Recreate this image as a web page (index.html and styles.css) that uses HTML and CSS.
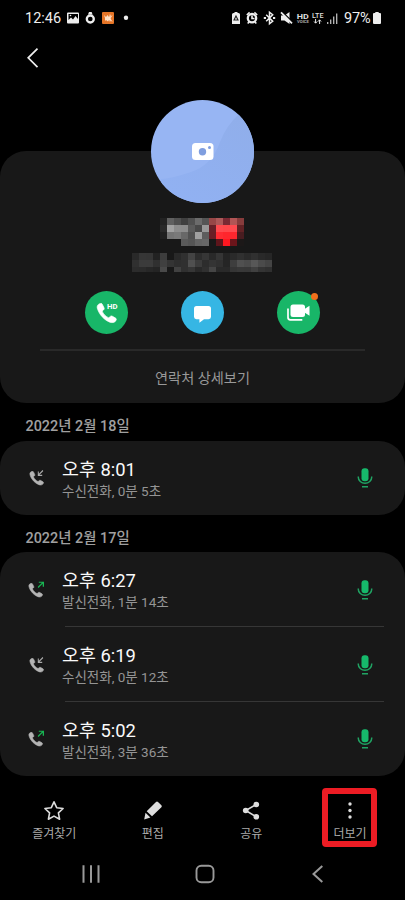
FILE: index.html
```
<!DOCTYPE html>
<html lang="ko">
<head>
<meta charset="utf-8">
<title>연락처</title>
<link rel="stylesheet" href="styles.css">
</head>
<body>
<svg class="defs" aria-hidden="true">
  <symbol id="phone" viewBox="0 0 16 16"><path d="M1.2 4.6C.2 2.2 1.8.6 3.5.3c.6-.1 1 .1 1.3.7l1.3 2.6c.3.7.2 1.2-.4 1.7l-1 .9c.6 1.900 3 4.300 5 5.100l1-.9c.6-.6 1.100-.7 1.800-.3l2.400 1.400c.6.400.7.900.5 1.400-.7 1.900-2.700 2.500-4.900 1.700C6.200 12.900 2.500 8.800 1.200 4.600Z"/></symbol>
  <symbol id="mic" viewBox="0 0 16 20"><rect x="4.500" y=".3" width="7" height="13" rx="3" fill="#16b96b"/><path d="M1.300 8.500v.7c0 3.500 3 6 6.700 6s6.700-2.500 6.700-6v-.7M5 18.700h6" fill="none" stroke="#20a363" stroke-width="1.500"/></symbol>
  <symbol id="in" viewBox="0 0 6 6"><path d="M5.500.5.8 5.200M.7 1.400v4h4" fill="none" stroke="#aaa" stroke-width="1.200"/></symbol>
  <symbol id="out" viewBox="0 0 6 6"><path d="M.5 5.500 5.200.8M1.200.6h4.200v4.200" fill="none" stroke="#18b653" stroke-width="1.200"/></symbol>
</svg>
<div class="screen">
  <header class="status">
    <span class="clock">12:46</span>
    <svg class="notices" width="65" height="14" viewBox="0 0 65 14">
      <path fill="#eee" fill-rule="evenodd" d="M1 1.500h10q1 0 1 1v9q0 1-1 1H1q-1 0-1-1v-9q0-1 1-1Zm.5 1.500v6L4 6.500l2 2L8.500 5 11 8V3Z"/><circle cx="3.500" cy="4.500" r=".8" fill="#eee"/>
      <circle cx="23.300" cy="8" r="3.500" fill="none" stroke="#eee" stroke-width="2.300"/><path d="m21 3.500 1-2.500h2.600l1 2.500Z" fill="#eee"/>
      <rect x="35" y="1" width="12" height="12" rx="1" fill="#e57527"/><path d="m37 4 2 2 1.500-2 1.500 2 2-2-1 3 1 3-2-1-1 1.500L39 9l-1 1V7Z" fill="#ffe0c4"/><path d="M43 3.500v7m2-6-2 3 2 3" fill="none" stroke="#ffe8d4" stroke-width=".8"/>
      <circle cx="59" cy="6.800" r="2.200" fill="#eee"/>
    </svg>
    <svg class="signals" width="109" height="16" viewBox="0 0 109 16">
      <path d="M3.500 2h3v1h1q1.500 0 1.500 1.500V14H1V4.500Q1 3 2.500 3h1Z" fill="#eee"/><path d="m5 6 2 4H3Z" fill="none" stroke="#222" stroke-width="1.100"/>
      <circle cx="21" cy="8.200" r="4.200" fill="none" stroke="#eee" stroke-width="2.300"/><path d="M21 5.500v3h2.500M15.800 5l2.800-2.700M26.200 5l-2.800-2.700M18 12l-1.300 1.500M24 12l1.300 1.500" fill="none" stroke="#eee" stroke-width="1.600"/>
      <path d="m35.200 4.800 6.500 6.500-3.200 2.500V2.200l3.200 2.500-6.500 6.600" fill="none" stroke="#eee" stroke-width="1.500"/><path d="M32.800 8h2.200M42 8h2.200" stroke="#eee" stroke-width="2"/>
      <path d="M50 5.500h3.500L58.500 2v12l-5-3.500H50Z" fill="#eee"/><path d="M51 1.500 62 12.500" stroke="#000" stroke-width="1.500"/><path d="M50 2.300 61 13.300" stroke="#eee" stroke-width="1.800"/>
      <text x="65.700" y="9" class="hd" textLength="12" lengthAdjust="spacingAndGlyphs">HD</text><text x="66" y="13" class="voice" textLength="12" lengthAdjust="spacingAndGlyphs">VOICE</text>
      <text x="81" y="8.200" class="lte" textLength="11.500" lengthAdjust="spacingAndGlyphs">LTE</text>
      <path d="M84.600 9v4m-1.500-1.500 1.500 1.700 1.500-1.700M88.600 14v-4m-1.500 1.500 1.500-1.700 1.500 1.700" fill="none" stroke="#eee"/>
      <path d="M96.700 14v-2M99.700 14V9.500M102.700 14V6.500M105.700 14V3.500" stroke="#bbb" stroke-width="1.300"/>
    </svg>
    <span class="percent">97%</span>
    <svg class="battery" width="8" height="12" viewBox="0 0 8 12"><path d="M2.300 0h3.400v1H7q1 0 1 1v9q0 1-1 1H1q-1 0-1-1V2q0-1 1-1h1.300Z" fill="#eee"/></svg>
  </header>
  <nav class="appbar"><svg width="12" height="20" viewBox="0 0 12 20"><path d="M10.500.7 1.200 9.800l9.300 9.300" fill="none" stroke="#eee" stroke-width="1.700"/></svg></nav>

  <section class="card profile">
    <svg class="avatar" width="103" height="103" viewBox="0 0 103 103">
      <defs><clipPath id="round"><circle cx="51.500" cy="51.500" r="51.500"/></clipPath><linearGradient id="shade" x1="1" y1="0" x2=".3" y2="1"><stop stop-color="#90aeea"/><stop offset="1" stop-color="#91b1f2"/></linearGradient></defs>
      <g clip-path="url(#round)"><path fill="#97b5f3" d="M0 0h103v103H0z"/><path d="M88 14Q75 26 69 42 61 65 40 72T10 79v24h93V14Z" fill="url(#shade)"/></g>
      <rect x="41" y="43" width="21.500" height="17" rx="3.500" fill="#fff"/><circle cx="51.500" cy="51.700" r="3.700" fill="#7f9edf"/><circle cx="58.500" cy="47.500" r="1.500" fill="#7f9edf"/>
    </svg>
    <svg class="mosaic name" width="84" height="28" data-cells="222222 606060 505050 404040 505050 6b6b6b 555555 984747 ad5959 7a2933 b15555 873c3c|292929 a2a2a2 8d8d8d 8c8c8c 5b5b5b 484848 999999 672027 ff4a4f ff484c ff4a50 622225|202020 757575 7a7a7a 686868 515151 a0a0a0 5d5d5d 691e25 ff2b32 ff262d ff262e 481c20|181818 181818 181818 5a5a5a 555555 646464 676767 181818 5e151b ff1720 6c151b 1c1818"></svg>
    <svg class="mosaic number" width="140" height="19" data-cells="292929 363636 353535 222222 3d3d3d 181818 292929 303030 434343 2d2d2d 363636 292929 353535 242424 2a2a2a 303030 2a2a2a 303030 292929 262626|303030 3b3b3b 3b3b3b 303030 404040 343434 2e2e2e 303030 505050 3c3c3c 2d2d2d 343434 303030 252525 3e3e3e 505050 4b4b4b 575757 4b4b4b 444444|2c2c2c 2b2b2b 272727 242424 494949 181818 414141 303030 363636 292929 303030 454545 292929 292929 353535 383838 373737 404040 343434 303030"></svg>
    <div class="actions">
      <button class="act green"><svg width="43" height="43" viewBox="0 0 43 43"><use href="#phone" x="11" y="12" width="21" height="21" fill="#fff" stroke="#fff" stroke-width=".5"/><text x="22" y="18" class="hdcall" textLength="10.500" lengthAdjust="spacingAndGlyphs">HD</text></svg></button>
      <button class="act blue"><svg width="43" height="43" viewBox="0 0 43 43"><path d="M15.500 15h12q2.500 0 2.500 2.500v8.300q0 2.400-2.500 2.400H23l-4.600 3.600v-3.600h-2.900q-2.500 0-2.500-2.400v-8.300Q13 15 15.500 15Z" fill="#fff"/></svg></button>
      <button class="act green"><svg width="43" height="43" viewBox="0 0 43 43"><rect x="13.500" y="13.500" width="14.500" height="12.500" rx="2.500" fill="#fff"/><path d="m27.500 18 5-3.200v10l-5-3.200Z" fill="#fff"/><path d="M11 17.500v9q0 2.300 2.300 2.300h12" fill="none" stroke="#fff" stroke-width="1.700"/></svg><i class="dot"></i></button>
    </div>
    <a class="details">연락처 상세보기</a>
  </section>

  <h2 class="date">2022년 2월 18일</h2>
  <section class="card">
    <div class="call"><svg class="kind" width="18" height="18" viewBox="0 0 18 18"><use href="#phone" x="1" y="2" width="15" height="15"/><use href="#in" x="9.500" y="1" width="6" height="6"/></svg><div class="info"><b>오후 8:01</b><span>수신전화, 0분 5초</span></div><svg class="mic" width="16" height="20"><use href="#mic"/></svg></div>
  </section>
  <h2 class="date second">2022년 2월 17일</h2>
  <section class="card">
    <div class="call"><svg class="kind" width="18" height="18" viewBox="0 0 18 18"><use href="#phone" x="0" y="2" width="15" height="15"/><use href="#out" x="9.500" y=".5" width="6.500" height="6.500"/></svg><div class="info"><b>오후 6:27</b><span>발신전화, 1분 14초</span></div><svg class="mic" width="16" height="20"><use href="#mic"/></svg></div>
    <div class="call"><svg class="kind" width="18" height="18" viewBox="0 0 18 18"><use href="#phone" x="1" y="2" width="15" height="15"/><use href="#in" x="9.500" y="1" width="6" height="6"/></svg><div class="info"><b>오후 6:19</b><span>수신전화, 0분 12초</span></div><svg class="mic" width="16" height="20"><use href="#mic"/></svg></div>
    <div class="call"><svg class="kind" width="18" height="18" viewBox="0 0 18 18"><use href="#phone" x="0" y="2" width="15" height="15"/><use href="#out" x="9.500" y=".5" width="6.500" height="6.500"/></svg><div class="info"><b>오후 5:02</b><span>발신전화, 3분 36초</span></div><svg class="mic" width="16" height="20"><use href="#mic"/></svg></div>
  </section>

  <footer class="tools">
    <a><svg width="22" height="22" viewBox="0 0 22 22"><path d="m11 1.800 2.700 5.900 6.400.8-4.700 4.400 1.200 6.300-5.600-3.100-5.600 3.100 1.200-6.300-4.700-4.400 6.400-.8Z" fill="none" stroke="#ddd" stroke-width="1.600" stroke-linejoin="round"/></svg><span>즐겨찾기</span></a>
    <a><svg width="22" height="22" viewBox="0 0 22 22"><path d="M14 2q1-.9 2 0l3.400 3.200q.9 1 0 2L10 16.200 4.700 11.200ZM3.500 12.700l4.900 4.700-6.200 2Z" fill="#ddd"/></svg><span>편집</span></a>
    <a><svg width="22" height="22" viewBox="0 0 22 22"><path d="M16.300 4.500 5.700 10.500l10.600 6.300" fill="none" stroke="#ddd" stroke-width="1.600"/><g fill="#ddd"><circle cx="16.300" cy="4.500" r="2.800"/><circle cx="5.700" cy="10.500" r="2.800"/><circle cx="16.300" cy="16.800" r="2.800"/></g></svg><span>공유</span></a>
    <a class="more"><svg width="22" height="22" viewBox="0 0 22 22" fill="#ddd"><circle cx="11" cy="4" r="1.700"/><circle cx="11" cy="10.500" r="1.700"/><circle cx="11" cy="17" r="1.700"/></svg><span>더보기</span></a>
  </footer>
  <nav class="system">
    <svg width="18" height="18" viewBox="0 0 18 18"><path d="M1.500.3v17.400M9 .3v17.400M16.500.3v17.400" stroke="#999" stroke-width="2"/></svg>
    <svg class="home" width="20" height="20" viewBox="0 0 20 20"><rect x="1.500" y="1.700" width="17" height="16.500" rx="4.800" fill="none" stroke="#999" stroke-width="1.900"/></svg>
    <svg width="12" height="18" viewBox="0 0 12 18"><path d="M10.300.9 1.500 9l8.800 8.100" fill="none" stroke="#999" stroke-width="2"/></svg>
  </nav>
</div>
<script src="mosaic.js"></script>
</body>
</html>
```
FILE: styles.css
```
* { box-sizing: border-box; }
body { margin: 0; background: #000; color: #eee; font-family: Roboto, "Noto Sans CJK KR", sans-serif; }
svg { display: block; flex: none; }
.defs { position: absolute; width: 0; height: 0; }
.screen { width: 405px; height: 900px; overflow: hidden; background: #000; }
.status { height: 36px; display: flex; align-items: center; padding-left: 25px; font-size: 14.500px; }
.clock { width: 42px; }
.signals { margin-left: 99px; }
.percent { width: 27px; margin-left: 4px; letter-spacing: -.1px; }
.battery { margin-left: 2px; }
.hd { font: 700 8px Roboto, sans-serif; fill: #ddd; }
.voice { font: 700 3.500px Roboto, sans-serif; fill: #aaa; }
.lte { font: 500 7px Roboto, sans-serif; fill: #ddd; }
.appbar { height: 115px; padding: 12px 0 0 27px; }
.card { background: #181818; border-radius: 26px; }
.profile { height: 252px; display: flex; flex-direction: column; align-items: center; }
.avatar { margin-top: -51px; }
.name { margin: 15px 1px 0 0; }
.number { margin: 7px 1px 0 0; }
.actions { width: 235px; display: flex; justify-content: space-between; margin: 19px 0 15px; }
.act { position: relative; width: 43px; height: 43px; padding: 0; border: 0; border-radius: 50%; }
.green { background: #18b668; }
.blue { background: #36b6e4; }
.dot { position: absolute; right: 2px; top: 2px; width: 7px; height: 7px; border-radius: 50%; background: #f0701c; }
.hdcall { font: 700 7px Roboto, sans-serif; fill: #fff; }
.details { width: 325px; border-top: 2px solid #292929; text-align: center; font-size: 14.200px; line-height: 20px; padding-top: 17px; color: #999; }
.date { margin: 0; height: 38px; padding: 14px 0 0 25.500px; font-size: 14.400px; line-height: 20px; font-weight: 500; color: #a0a0a0; }
.second { height: 37px; }
.call { height: 74px; display: flex; align-items: center; padding: 0 32px 0 28px; position: relative; }
.call + .call, .second + .card .call:first-child { height: 75px; }
.call:last-child:not(:first-child) { height: 74px; }
.call + .call::before { content: ""; position: absolute; left: 65px; right: 21px; top: -1px; height: 1px; background: #363636; }
.kind { fill: #b4b4b4; stroke: #b4b4b4; stroke-width: .6px; }
.info { flex: 1; margin: 2px 0 0 16px; }
.info b { display: block; font-size: 18.400px; line-height: 24px; font-weight: 400; color: #fafafa; }
.info span { display: block; font-size: 13.500px; line-height: 19px; color: #949494; }
.tools { height: 74px; display: flex; padding: 12px 0 0 5px; }
.tools a { width: 98.500px; height: 59px; display: flex; flex-direction: column; align-items: center; padding-top: 12px; font-size: 12px; line-height: 18px; color: #aaa; }
.tools span { margin-top: 3px; }
.tools .more { width: 55px; margin-left: 21.500px; border: 6px solid #ed1c24; border-radius: 4px; padding: 6px 0 0 1px; white-space: nowrap; }
.system { height: 48px; display: flex; align-items: center; justify-content: space-between; padding: 0 81px 0 82px; }
.home { margin-right: 3px; }
```
FILE: mosaic.js
```
// Paints each privacy mosaic as a grid of 7px cells.
document.querySelectorAll(".mosaic").forEach((svg) => {
  svg.dataset.cells.split("|").forEach((row, y) => {
    row.split(" ").forEach((color, x) => {
      const cell = document.createElementNS("http://www.w3.org/2000/svg", "rect");
      cell.setAttribute("x", x * 7);
      cell.setAttribute("y", y * 7);
      cell.setAttribute("width", 7);
      cell.setAttribute("height", 7);
      cell.setAttribute("fill", "#" + color);
      svg.appendChild(cell);
    });
  });
});
```
